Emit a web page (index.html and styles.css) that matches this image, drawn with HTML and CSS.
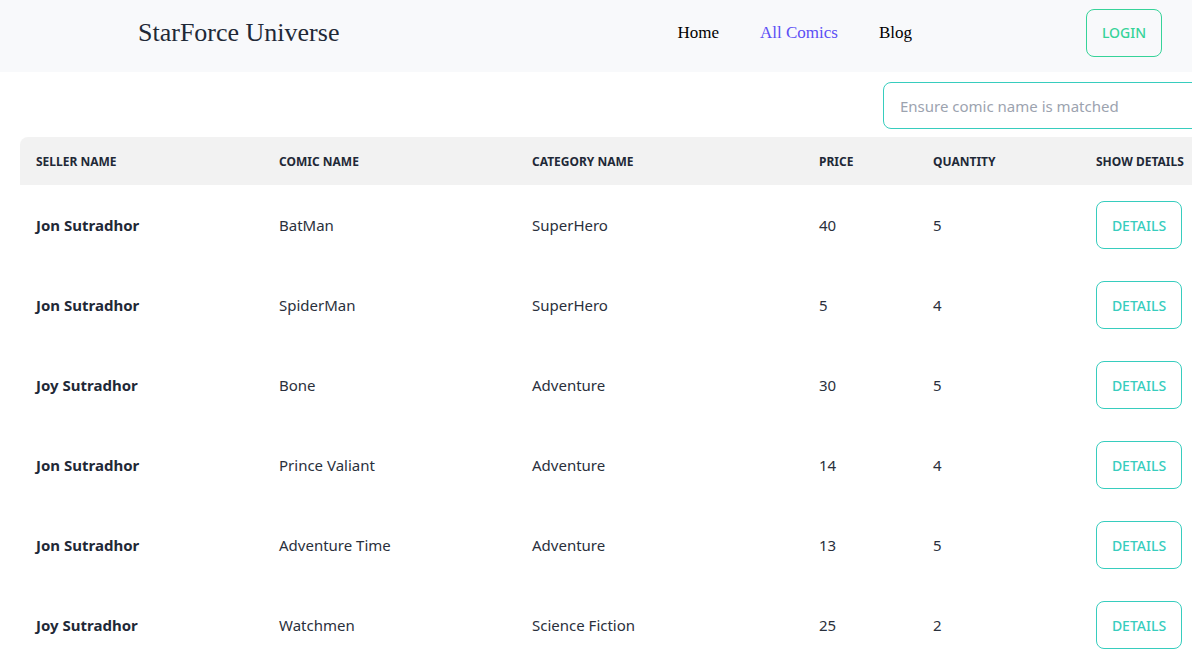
FILE: index.html
```html
<!DOCTYPE html>
<html lang="en">
<head>
<meta charset="utf-8">
<title>StarForce Universe</title>
<link rel="stylesheet" href="styles.css">
</head>
<body>
<header class="navbar">
  <a class="brand" href="#">StarForce Universe</a>
  <nav class="menu">
    <a href="#">Home</a>
    <a href="#" class="active">All Comics</a>
    <a href="#">Blog</a>
  </nav>
  <button class="btn btn-login">LOGIN</button>
</header>
<main class="content">
  <div class="search-row">
    <input class="search" type="text" placeholder="Ensure comic name is matched">
  </div>
  <table class="table">
    <colgroup>
      <col class="c-seller"><col class="c-comic"><col class="c-cat"><col class="c-price"><col class="c-qty"><col class="c-show">
    </colgroup>
    <thead>
      <tr><th>Seller Name</th><th>Comic Name</th><th>Category Name</th><th>Price</th><th>Quantity</th><th>Show Details</th></tr>
    </thead>
    <tbody>
      <tr><td class="seller">Jon Sutradhor</td><td>BatMan</td><td>SuperHero</td><td>40</td><td>5</td><td><button class="btn btn-details">DETAILS</button></td></tr>
      <tr><td class="seller">Jon Sutradhor</td><td>SpiderMan</td><td>SuperHero</td><td>5</td><td>4</td><td><button class="btn btn-details">DETAILS</button></td></tr>
      <tr><td class="seller">Joy Sutradhor</td><td>Bone</td><td>Adventure</td><td>30</td><td>5</td><td><button class="btn btn-details">DETAILS</button></td></tr>
      <tr><td class="seller">Jon Sutradhor</td><td>Prince Valiant</td><td>Adventure</td><td>14</td><td>4</td><td><button class="btn btn-details">DETAILS</button></td></tr>
      <tr><td class="seller">Jon Sutradhor</td><td>Adventure Time</td><td>Adventure</td><td>13</td><td>5</td><td><button class="btn btn-details">DETAILS</button></td></tr>
      <tr><td class="seller">Joy Sutradhor</td><td>Watchmen</td><td>Science Fiction</td><td>25</td><td>2</td><td><button class="btn btn-details">DETAILS</button></td></tr>
    </tbody>
  </table>
</main>
</body>
</html>
```

FILE: styles.css
```css
html { overflow: hidden; }
body {
  margin: 0;
  background: #ffffff;
  color: #1f2937;
  font-family: "Noto Sans", "Open Sans", sans-serif;
}
.navbar {
  display: flex;
  align-items: center;
  height: 72px;
  background: #f8f9fb;
  padding: 0 30px 7px 138px;
  box-sizing: border-box;
}
.brand {
  flex: 1;
  font-family: "Liberation Serif", "DejaVu Serif", serif;
  font-size: 26px;
  color: #1f2937;
  text-decoration: none;
}
.menu {
  display: flex;
  gap: 41px;
  margin-right: 174px;
}
.menu a {
  font-family: "Liberation Serif", serif;
  font-size: 17px;
  color: #000;
  text-decoration: none;
}
.menu a.active { color: #5b4ef5; }
.btn {
  background: transparent;
  font-family: "Noto Sans", sans-serif;
  font-weight: 600;
  font-size: 14px;
  border-radius: 8px;
  cursor: pointer;
  padding: 0;
  box-sizing: border-box;
}
.btn-login {
  width: 76px;
  height: 48px;
  border: 1px solid #36d399;
  color: #36d399;
  font-weight: 500;
}
.content {
  width: 1196px;
  margin-left: 20px;
}
.search-row {
  display: flex;
  justify-content: flex-end;
  padding-top: 10px;
  margin-bottom: 8px;
}
.search {
  width: 333px;
  height: 47px;
  box-sizing: border-box;
  border: 1px solid #37cdbe;
  border-radius: 8px;
  padding: 0 16px;
  font-family: "Noto Sans", sans-serif;
  font-size: 15px;
  color: #1f2937;
  outline: none;
}
.search::placeholder { color: #9ca3af; }
.table {
  width: 1196px;
  border-collapse: separate;
  border-spacing: 0;
  table-layout: fixed;
  font-size: 15px;
}
.c-seller { width: 243px; }
.c-comic { width: 253px; }
.c-cat { width: 287px; }
.c-price { width: 114px; }
.c-qty { width: 163px; }
.c-show { width: 136px; }
.table th {
  background: #f2f2f2;
  text-align: left;
  text-transform: uppercase;
  font-size: 12px;
  font-weight: 700;
  height: 48px;
  padding: 0 16px;
  white-space: nowrap;
}
.table th:first-child { border-top-left-radius: 8px; }
.table td {
  height: 80px;
  padding: 0 16px;
  box-sizing: border-box;
  vertical-align: middle;
  white-space: nowrap;
  color: #2a303c;
}
.table td.seller { font-weight: 700; color: #1f2937; }
.btn-details {
  width: 86px;
  height: 48px;
  border: 1px solid #37cdbe;
  color: #37cdbe;
  font-weight: 500;
}
```
